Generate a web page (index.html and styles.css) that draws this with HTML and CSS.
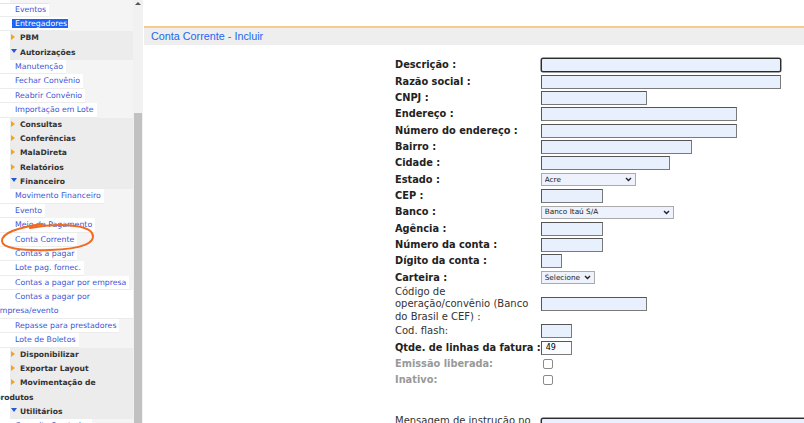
FILE: index.html
```html
<!DOCTYPE html>
<html lang="pt-BR">
<head>
    <meta charset="UTF-8">
    <title>Conta Corrente - Incluir</title>
    <link rel="stylesheet" href="styles.css">
</head>
<body>
    <div class="sidebar">
        <ul class="menu">
            <li class="sub first"><a>Eventos</a></li>
            <li class="sub"><a class="active">Entregadores</a></li>
            <li class="head"><span class="arrow"></span>PBM</li>
            <li class="head open"><span class="arrow"></span>Autorizações</li>
            <li class="sub"><a>Manutenção</a></li>
            <li class="sub"><a>Fechar Convênio</a></li>
            <li class="sub"><a>Reabrir Convênio</a></li>
            <li class="sub"><a>Importação em Lote</a></li>
            <li class="head"><span class="arrow"></span>Consultas</li>
            <li class="head"><span class="arrow"></span>Conferências</li>
            <li class="head"><span class="arrow"></span>MalaDireta</li>
            <li class="head"><span class="arrow"></span>Relatórios</li>
            <li class="head open"><span class="arrow"></span>Financeiro</li>
            <li class="sub"><a>Movimento Financeiro</a></li>
            <li class="sub"><a>Evento</a></li>
            <li class="sub"><a>Meio de Pagamento</a></li>
            <li class="sub"><a>Conta Corrente</a></li>
            <li class="sub"><a>Contas a pagar</a></li>
            <li class="sub"><a>Lote pag. fornec.</a></li>
            <li class="sub"><a>Contas a pagar por empresa</a></li>
            <li class="sub"><a>Contas a pagar por empresa/evento</a></li>
            <li class="sub"><a>Repasse para prestadores</a></li>
            <li class="sub"><a>Lote de Boletos</a></li>
            <li class="head"><span class="arrow"></span>Disponibilizar</li>
            <li class="head"><span class="arrow"></span>Exportar Layout</li>
            <li class="head"><span class="arrow"></span>Movimentação de produtos</li>
            <li class="head open"><span class="arrow"></span>Utilitários</li>
            <li class="sub"><a>Consulta Prestador</a></li>
        </ul>
        <svg class="mark" width="100" height="40" viewBox="0 220 100 40">
            <path d="M30 228 C55 223, 86 224, 92 233 C97 243, 82 249, 50 250 C20 251, 2 248, 2 241 C2 233, 16 228, 42 224" fill="none" stroke="#f26a1f" stroke-width="2" stroke-linecap="round"/>
        </svg>
    </div>
    <div class="scrollbar">
        <span class="up"></span>
        <div class="thumb"></div>
    </div>

    <div class="main">
        <div class="title-bar">Conta Corrente - Incluir</div>

        <table class="form">
            <tr><td class="lbl">Descrição :</td><td><input class="w240 focus" type="text"></td></tr>
            <tr><td class="lbl">Razão social :</td><td><input class="w240" type="text"></td></tr>
            <tr><td class="lbl">CNPJ :</td><td><input class="w106" type="text"></td></tr>
            <tr><td class="lbl">Endereço :</td><td><input class="w196" type="text"></td></tr>
            <tr><td class="lbl">Número do endereço :</td><td><input class="w196" type="text"></td></tr>
            <tr><td class="lbl">Bairro :</td><td><input class="w151" type="text"></td></tr>
            <tr><td class="lbl">Cidade :</td><td><input class="w129" type="text"></td></tr>
            <tr><td class="lbl">Estado :</td><td>
                <span class="select">
                    <select class="w95">
                        <option>Acre</option>
                        <option>Alagoas</option>
                    </select>
                    <svg class="chev" width="7" height="5" viewBox="0 0 7 5"><path d="M1 1 L3.5 3.5 L6 1" fill="none" stroke="#222" stroke-width="1.4"/></svg>
                </span>
            </td></tr>
            <tr><td class="lbl">CEP :</td><td><input class="w62" type="text"></td></tr>
            <tr><td class="lbl">Banco :</td><td>
                <span class="select">
                    <select class="w133">
                        <option>Banco Itaú S/A</option>
                        <option>Banco do Brasil</option>
                    </select>
                    <svg class="chev" width="7" height="5" viewBox="0 0 7 5"><path d="M1 1 L3.5 3.5 L6 1" fill="none" stroke="#222" stroke-width="1.4"/></svg>
                </span>
            </td></tr>
            <tr><td class="lbl">Agência :</td><td><input class="w62" type="text"></td></tr>
            <tr><td class="lbl">Número da conta :</td><td><input class="w62" type="text"></td></tr>
            <tr><td class="lbl">Dígito da conta :</td><td><input class="w21" type="text"></td></tr>
            <tr><td class="lbl">Carteira :</td><td>
                <span class="select">
                    <select class="w54">
                        <option>Selecione</option>
                    </select>
                    <svg class="chev" width="7" height="5" viewBox="0 0 7 5"><path d="M1 1 L3.5 3.5 L6 1" fill="none" stroke="#222" stroke-width="1.4"/></svg>
                </span>
            </td></tr>
            <tr class="tall"><td class="plain">Código de operação/convênio (Banco do Brasil e CEF) :</td><td><input class="w106" type="text"></td></tr>
            <tr><td class="plain">Cod. flash:</td><td><input class="w31" type="text"></td></tr>
            <tr><td class="lbl">Qtde. de linhas da fatura :</td><td><input class="w31 small" type="text" value="49"></td></tr>
            <tr><td class="lbl muted">Emissão liberada:</td><td><input type="checkbox"></td></tr>
            <tr><td class="lbl muted">Inativo:</td><td><input type="checkbox"></td></tr>
            <tr class="spacer"><td></td><td></td></tr>
            <tr class="top"><td class="plain">Mensagem de instrução no boleto :</td><td><input class="wide focus" type="text"></td></tr>
        </table>
    </div>
</body>
</html>
```

FILE: styles.css
```css
html, body {
    margin: 0;
    padding: 0;
    height: 423px;
    overflow: hidden;
    background: #fff;
}
body {
    display: flex;
    font-family: "DejaVu Sans", Verdana, sans-serif;
}

/* left menu */
.sidebar {
    position: relative;
    width: 133px;
    flex: none;
    overflow: hidden;
    background: linear-gradient(to right, #fff 10px, #f4f4f4 10px);
}
.menu {
    list-style: none;
    margin: 2.5px 0 0 -5px;
    padding: 0;
    width: 138px;
    font-size: 7.8px;
    line-height: 14.37px;
}
.sub {
    display: table;
    max-width: 138px;
    text-indent: 20px;
    background: #fff;
    box-shadow: inset 0 -1px 0 #ececec;
}
.sub.first {
    box-shadow: inset 0 -1px 0 #ececec, inset 0 1px 0 #e4e4e4;
}
.sub a {
    color: #3d55d4;
    padding-right: 3px;
}
.sub a.active {
    background: #1b64f5;
    color: #fff;
    box-shadow: -3px 0 0 #1b64f5;
    padding-right: 1px;
}
.head {
    font-weight: bold;
    font-size: 7.6px;
    color: #333;
    text-indent: 16px;
    background: linear-gradient(to right, transparent 15px, #ececec 15px);
}
.arrow {
    display: inline-block;
    width: 0;
    height: 0;
    text-indent: 0;
    margin-right: 5px;
    vertical-align: 0;
    border-left: 4px solid #f5a31c;
    border-top: 3.5px solid transparent;
    border-bottom: 3.5px solid transparent;
}
.open .arrow {
    border-left: 3px solid transparent;
    border-right: 3px solid transparent;
    border-top: 4px solid #2456d8;
    border-bottom: 0;
    margin-right: 3px;
    vertical-align: 2px;
}
.mark {
    position: absolute;
    left: 0;
    top: 220px;
}

/* fake scrollbar of the menu frame */
.scrollbar {
    width: 10px;
    flex: none;
    background: #f1f1f1;
    position: relative;
    margin-right: 1px;
}
.up {
    position: absolute;
    left: 2px;
    top: 2px;
    border-left: 3px solid transparent;
    border-right: 3px solid transparent;
    border-bottom: 3px solid #555;
}
.thumb {
    position: absolute;
    left: 1px;
    right: 1px;
    top: 113px;
    bottom: 0;
    background: #c1c1c1;
}

/* content frame */
.main {
    flex: 1;
    padding-top: 26px;
    min-width: 0;
}
.title-bar {
    border-top: 2px solid #f8cb8c;
    background: #eeeeee;
    height: 17px;
    line-height: 17px;
    padding-left: 7px;
    font-family: "Liberation Sans", Arial, sans-serif;
    font-size: 10.8px;
    color: #2466f2;
}

.form {
    border-collapse: collapse;
    margin: 12px 0 0 251px;
    color: #222;
    font-size: 10px;
    line-height: 12px;
}
.form td {
    height: 16.35px;
    padding: 0;
    vertical-align: middle;
}
.form .lbl {
    font-size: 9.8px;
    font-weight: bold;
    width: 146px;
    white-space: nowrap;
}
.form .plain {
    font-size: 10px;
    width: 146px;
    line-height: 12.4px;
    color: #333;
}
.form .muted {
    color: #999;
}
.form .tall td {
    height: 37px;
}
.form .spacer td {
    height: 27px;
}
.form .top td {
    vertical-align: top;
}
.form .top td + td {
    padding-top: 3px;
}

input[type="text"] {
    box-sizing: border-box;
    height: 14px;
    margin: 0;
    padding: 0 3px;
    border: 1px solid #7a7a7a;
    border-top-color: #555;
    border-left-color: #555;
    background: #e9f0fd;
    font-family: "DejaVu Sans", Verdana, sans-serif;
    font-size: 8px;
    vertical-align: middle;
}
input.focus {
    border: 1px solid #2b2b2b;
    border-radius: 2px;
    box-shadow: 0 0 0 0.5px #444;
}
input.small {
    background: #fafcff;
    padding-left: 4px;
}

.select {
    position: relative;
    display: inline-block;
    vertical-align: middle;
    line-height: 0;
}
select {
    -webkit-appearance: none;
    appearance: none;
    box-sizing: border-box;
    height: 12.5px;
    margin: 0;
    padding: 0 10px 0 3px;
    border: 1px solid #aaa;
    border-radius: 0;
    background: #edf2fc;
    font-family: "DejaVu Sans", Verdana, sans-serif;
    font-size: 7.3px;
    line-height: 10px;
    color: #222;
}
.chev {
    position: absolute;
    right: 4px;
    top: 4px;
    pointer-events: none;
}
input[type="checkbox"] {
    -webkit-appearance: none;
    appearance: none;
    width: 10px;
    height: 10px;
    margin: 0 0 0 2px;
    border: 1px solid #8a8a8a;
    border-radius: 2px;
    background: #fff;
    vertical-align: middle;
}

.w240 { width: 240px; }
.w196 { width: 196px; }
.w151 { width: 151px; }
.w129 { width: 129px; }
.w106 { width: 106px; }
.w62 { width: 62px; }
.w31 { width: 31px; }
.w21 { width: 21px; }
.w95 { width: 95px; }
.w133 { width: 133px; }
.w54 { width: 54px; }
.wide { width: 300px; }
```
